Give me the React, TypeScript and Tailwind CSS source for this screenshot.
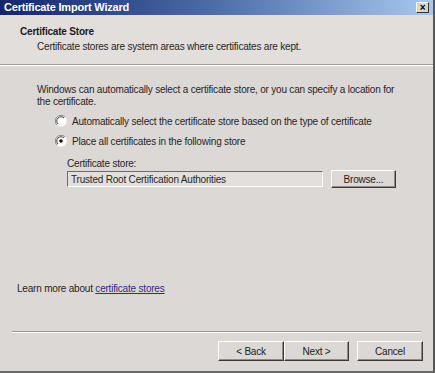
import React from "react";

const font = { fontFamily: '"Liberation Sans", Arial, sans-serif' };

function Radio({ checked }: { checked?: boolean }) {
  return (
    <svg width="12" height="12" viewBox="0 0 12 12" className="shrink-0">
      <circle cx="6" cy="6" r="5.5" fill="#ffffff" />
      <path d="M2 10 A5.5 5.5 0 0 1 10 2" stroke="#8a8784" strokeWidth="1" fill="none" />
      <path d="M3 9 A4 4 0 0 1 9 3" stroke="#404040" strokeWidth="1" fill="none" />
      <path d="M10 2 A5.5 5.5 0 0 1 2 10" stroke="#f2f0ee" strokeWidth="1" fill="none" />
      {checked && <circle cx="6" cy="6" r="1.8" fill="#111" />}
    </svg>
  );
}

function Btn({ children, className = "" }: { children: React.ReactNode; className?: string }) {
  return (
    <div
      className={`flex items-center justify-center border border-t-white border-l-white border-r-[#3a3a3a] border-b-[#3a3a3a] shadow-[inset_-1px_-1px_0_#8e8b88] text-[10px] text-[#222] ${className}`}
    >
      {children}
    </div>
  );
}

export default function App() {
  return (
    <div
      style={font}
      className="relative w-[435px] h-[373px] bg-[#dcd8d5] flex flex-col border-r-2 border-b-2 border-r-[#5a5856] border-b-[#6a6866] overflow-hidden tracking-[-0.2px]"
    >
      {/* Title bar */}
      <div className="h-[15px] flex items-center justify-between pl-[4px] pr-[4px] bg-gradient-to-r from-[#13266a] via-[#4e6ea8] to-[#a9c9ef]">
        <span className="text-[11px] font-bold text-white leading-none">Certificate Import Wizard</span>
        <div className="w-[13px] h-[11px] bg-[#d8d4d0] border border-t-white border-l-white border-r-[#333] border-b-[#333] flex items-center justify-center text-[10px] font-bold leading-none text-black">
          ×
        </div>
      </div>

      {/* Header */}
      <div className="h-[49px] bg-[#e2dedb] pt-[10px] pl-[20px]">
        <div className="text-[10px] font-bold text-[#1a1a1a] leading-[13px]">Certificate Store</div>
        <div className="text-[10px] text-[#262626] leading-[13px] pl-[17px] pt-[2px]">
          Certificate stores are system areas where certificates are kept.
        </div>
      </div>
      <div className="h-px bg-[#a09c99]" />
      <div className="h-px bg-white" />

      {/* Body */}
      <div className="flex-1 flex flex-col pl-[37px] pr-[20px] pt-[18px] text-[10px] text-[#262626]">
        <p className="leading-[12px]">
          Windows can automatically select a certificate store, or you can specify a location for
          <br />
          the certificate.
        </p>
        <div className="pl-[18px] pt-[7px] flex flex-col gap-[8px]">
          <label className="flex items-center gap-[5px] h-[12px]">
            <Radio />
            <span>Automatically select the certificate store based on the type of certificate</span>
          </label>
          <label className="flex items-center gap-[5px] h-[12px]">
            <Radio checked />
            <span>Place all certificates in the following store</span>
          </label>
        </div>
        <div className="pl-[30px] pt-[11px]">
          <div className="leading-[12px]">Certificate store:</div>
          <div className="flex items-center gap-[8px]">
            <div className="w-[256px] h-[16px] border border-t-[#6e6b68] border-l-[#6e6b68] border-r-white border-b-white bg-[#e3dfdc] flex items-center pl-[3px]">
              Trusted Root Certification Authorities
            </div>
            <Btn className="w-[65px] h-[18px]">Browse...</Btn>
          </div>
        </div>
        <div className="flex-1" />
        <div className="-ml-[20px] pb-[35px]">
          Learn more about <span className="text-[#2d2a8c] underline">certificate stores</span>
        </div>
      </div>

      <div className="mx-[12px] h-px bg-[#9c9895]" />
      <div className="mx-[12px] h-px bg-white" />

      {/* Footer buttons */}
      <div className="h-[38px] flex items-center justify-end pr-[10px] pb-[2px]">
        <Btn className="w-[66px] h-[20px]">&lt; Back</Btn>
        <Btn className="w-[65px] h-[20px]">Next &gt;</Btn>
        <Btn className="w-[66px] h-[20px] ml-[8px]">Cancel</Btn>
      </div>
    </div>
  );
}
